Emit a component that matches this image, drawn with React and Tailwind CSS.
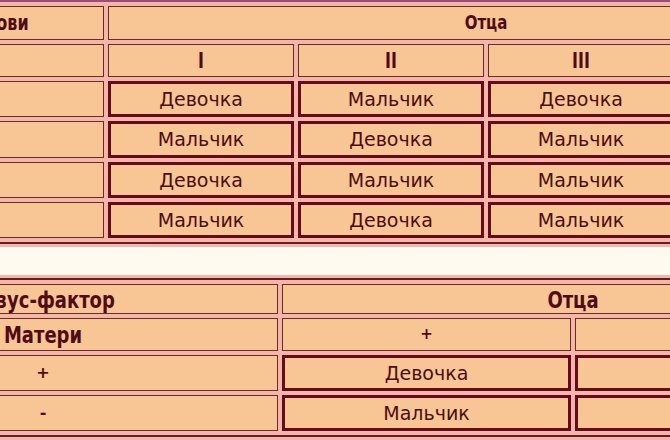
import React from 'react';

// Blood group table: mother rows I–IV, father columns I–IV
const bloodRows = [
  { label: 'I', cells: ['Девочка', 'Мальчик', 'Девочка', 'Мальчик'] },
  { label: 'II', cells: ['Мальчик', 'Девочка', 'Мальчик', 'Девочка'] },
  { label: 'III', cells: ['Девочка', 'Мальчик', 'Мальчик', 'Девочка'] },
  { label: 'IV', cells: ['Мальчик', 'Девочка', 'Мальчик', 'Мальчик'] },
];
const bloodHeights = ['h-[36px]', 'h-[37px]', 'h-[36px]', 'h-[36px]'];

const rhRows = [
  { label: '+', cells: ['Девочка', 'Мальчик'] },
  { label: '-', cells: ['Мальчик', 'Девочка'] },
];

const headCell = 'flex items-center justify-center bg-[#f8c594] border-[1.5px] border-[#6e2a24] font-bold text-[#4f0c16]';
const dataCell = 'flex items-center justify-center bg-[#f8c594] border-[3px] border-[#650b1a] text-[19px] text-[#4a0e12]';

// headers in the picture look stretched up a bit
const Tall = ({ children }) => <span className="inline-block scale-y-[1.3]">{children}</span>;

const App = () => {
  return (
    <div className="w-[670px] h-[440px] overflow-hidden bg-[#fffaf0] font-['DejaVu_Sans',sans-serif]">
      {/* Top table */}
      <div className="bg-[#f3b6aa] pb-[3px]">
        <div className="ml-[-164px] w-max border-2 border-[#6b1a2a] border-t-[#9c4d72] bg-[#f3b6aa] p-[4px]">
          <div className="grid grid-cols-[262px_186px_186px_186px_186px] gap-[4px]">
            <div className={`${headCell} h-[34px] pr-[14px] text-[16px]`}><Tall>Группа крови</Tall></div>
            <div className={`${headCell} col-span-4 text-[15px]`}><Tall>Отца</Tall></div>

            <div className={`${headCell} h-[33px]`}></div>
            {['I', 'II', 'III', 'IV'].map((n) => (
              <div key={n} className={`${headCell} text-[16px]`}><Tall>{n}</Tall></div>
            ))}

            {bloodRows.map((row, i) => (
              <React.Fragment key={row.label}>
                <div className={`${headCell} ${bloodHeights[i]}`}></div>
                {row.cells.map((c, j) => (
                  <div key={j} className={dataCell}>{c}</div>
                ))}
              </React.Fragment>
            ))}
          </div>
        </div>
      </div>

      {/* Rh factor table */}
      <div className="mt-[28px] bg-[#f3b6aa] pt-[3px] h-[200px]">
        <div className="ml-[-198px] w-max border-2 border-[#6b1a2a] bg-[#f3b6aa] p-[4px]">
          <div className="grid grid-cols-[470px_289px_289px] gap-[4px]">
            <div className={`${headCell} h-[30px] text-[18px]`}><Tall>Резус-фактор</Tall></div>
            <div className={`${headCell} col-span-2 text-[18px]`}><Tall>Отца</Tall></div>

            <div className={`${headCell} h-[33px] text-[18px]`}><Tall>Матери</Tall></div>
            <div className={`${headCell} text-[15px]`}>+</div>
            <div className={`${headCell} text-[15px]`}>-</div>

            {rhRows.map((row) => (
              <React.Fragment key={row.label}>
                <div className={`${headCell} h-[36px] text-[16px]`}>{row.label}</div>
                {row.cells.map((c, j) => (
                  <div key={j} className={dataCell}>{c}</div>
                ))}
              </React.Fragment>
            ))}
          </div>
        </div>
      </div>
    </div>
  );
};

export default App;
